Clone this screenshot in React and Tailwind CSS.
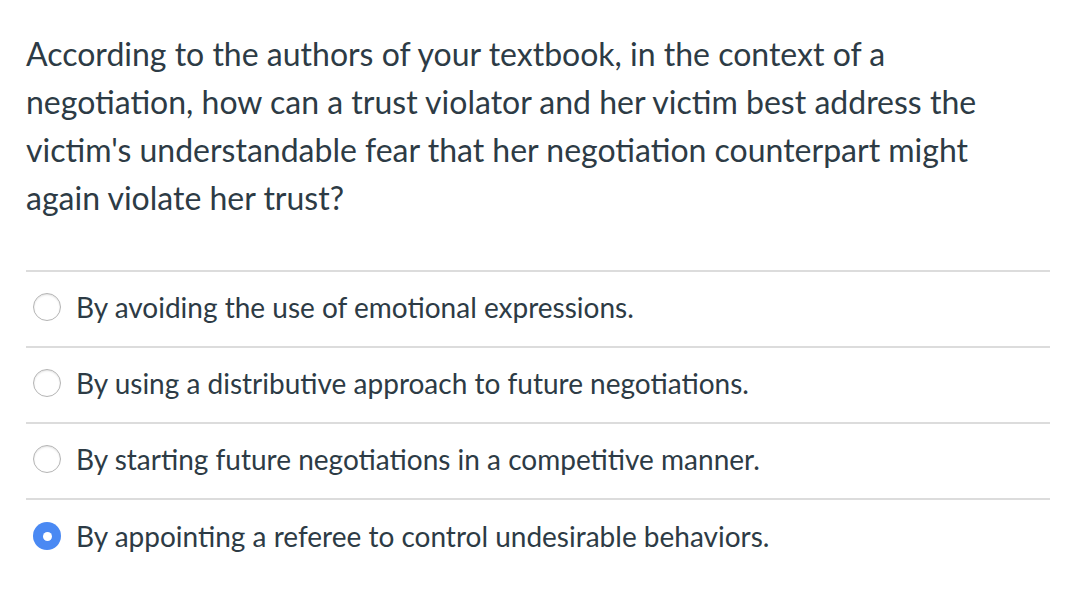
import React from 'react';

const options = [
  { text: 'By avoiding the use of emotional expressions.', checked: false },
  { text: 'By using a distributive approach to future negotiations.', checked: false },
  { text: 'By starting future negotiations in a competitive manner.', checked: false },
  { text: 'By appointing a referee to control undesirable behaviors.', checked: true },
];

const Radio = ({ checked }) =>
  checked ? (
    <span className="flex h-[28px] w-[28px] shrink-0 items-center justify-center rounded-full bg-[#4a89f3]">
      <span className="h-[9px] w-[9px] rounded-full bg-white" />
    </span>
  ) : (
    <span className="h-[28px] w-[28px] shrink-0 rounded-full border border-[#b5b5b5] bg-white shadow-[inset_0_1px_2px_rgba(0,0,0,0.12)]" />
  );

export default function App() {
  return (
    <div className="min-h-[602px] w-[1082px] bg-white pl-[26px] pr-[32px] pt-[30px] font-['Lato','Liberation_Sans',sans-serif] text-[#2d3b45]">
      <p className="pr-[20px] text-[32px] leading-[48px]">
        According to the authors of your textbook, in the context of a negotiation, how can a trust violator and her
        victim best address the victim's understandable fear that her negotiation counterpart might again violate her
        trust?
      </p>
      <div className="mt-[48px] border-t-2 border-[#dcdcdc]">
        {options.map((o, i) => (
          <div
            key={i}
            className={`flex h-[76px] items-center gap-[15px] pb-[4px] pl-[7px] ${i < options.length - 1 ? 'border-b-2 border-[#dcdcdc]' : ''}`}
          >
            <Radio checked={o.checked} />
            <span className="text-[28px]">{o.text}</span>
          </div>
        ))}
      </div>
    </div>
  );
}
